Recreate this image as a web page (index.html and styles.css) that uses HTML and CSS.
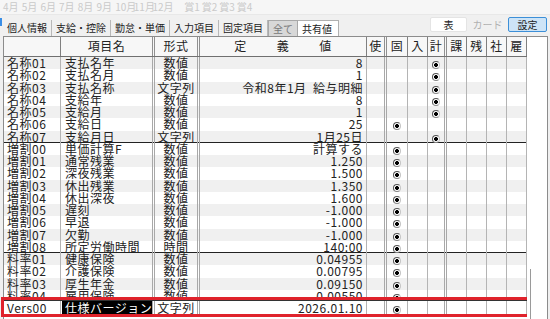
FILE: index.html
```html
<!DOCTYPE html>
<html lang="ja">
<head>
  <meta charset="UTF-8">
  <title>給与設定</title>
  <link rel="stylesheet" href="styles.css">
</head>
<body>
  <div class="months">
    <span class="month">4月</span><span class="month">5月</span><span class="month">6月</span>
    <span class="month">7月</span><span class="month">8月</span><span class="month">9月</span>
    <span class="month">10月</span><span class="month">11月</span><span class="month">12月</span>
    <span class="bonus">賞1</span><span class="bonus">賞2</span><span class="bonus">賞3</span><span class="bonus">賞4</span>
  </div>
  <div class="toolbar">
    <div class="tabs">
      <span class="tab">個人情報</span>
      <span class="tab">支給・控除</span>
      <span class="tab">勤怠・単価</span>
      <span class="tab">入力項目</span>
      <span class="tab">固定項目</span>
      <span class="tab tab-on">全て</span>
      <span class="tab tab-box">共有値</span>
    </div>
    <div class="views">
      <button class="view">表</button>
      <button class="view view-off">カード</button>
      <button class="view view-active">設定</button>
    </div>
  </div>
  <div class="sheet">
    <div class="grid">
      <div class="row head">
        <div class="cell"></div>
        <div class="cell c-center dbl">項目名</div>
        <div class="cell c-center dbl">形式</div>
        <div class="cell c-spread"><span>定</span><span>義</span><span>値</span></div>
        <div class="cell c-center dbl">使</div>
        <div class="cell c-center">固</div>
        <div class="cell c-center">入</div>
        <div class="cell c-center dbl">計</div>
        <div class="cell c-center">課</div>
        <div class="cell c-center">残</div>
        <div class="cell c-center">社</div>
        <div class="cell c-center">雇</div>
      </div>
      <div class="rows" id="rows"></div>
      <div class="row pinned" id="pinned"></div>
    </div>
    <div class="vscroll"><div class="thumb"></div></div>
  </div>
  <script>
    const flags = ["使", "固", "入", "計", "課", "残", "社", "雇"];
    const doubles = ["使", "計"];
    const items = [
      ["名称01", "支払名年", "数値", "8", "計"],
      ["名称02", "支払名月", "数値", "1", "計"],
      ["名称03", "支払名称", "文字列", "令和8年1月  給与明細", "計"],
      ["名称04", "支給年", "数値", "8", "計"],
      ["名称05", "支給月", "数値", "1", "計"],
      ["名称06", "支給日", "数値", "25", "固"],
      ["名称07", "支給月日", "文字列", "1月25日", "計"],
      ["増割00", "単価計算F", "数値", "計算する", "固", true],
      ["増割01", "通常残業", "数値", "1.250", "固"],
      ["増割02", "深夜残業", "数値", "1.500", "固"],
      ["増割03", "休出残業", "数値", "1.350", "固"],
      ["増割04", "休出深夜", "数値", "1.600", "固"],
      ["増割05", "遅刻", "数値", "-1.000", "固"],
      ["増割06", "早退", "数値", "-1.000", "固"],
      ["増割07", "欠勤", "数値", "-1.000", "固"],
      ["増割08", "所定労働時間", "時間", "140:00", "固"],
      ["料率01", "健康保険", "数値", "0.04955", "固", true],
      ["料率02", "介護保険", "数値", "0.00795", "固"],
      ["料率03", "厚生年金", "数値", "0.09150", "固"],
      ["料率04", "雇用保険", "数値", "0.00550", "固"]
    ];

    function cell(cls, text) {
      const div = document.createElement("div");
      div.className = "cell " + cls;
      if (text) div.textContent = text;
      return div;
    }

    function fillRow(row, item, selected) {
      const [code, name, type, value, mark] = item;
      row.appendChild(cell("c-code", code));
      const nameCell = cell("c-name dbl", selected ? "" : name);
      if (selected) {
        const sel = document.createElement("span");
        sel.className = "selected";
        sel.textContent = name;
        nameCell.appendChild(sel);
      }
      row.appendChild(nameCell);
      row.appendChild(cell("c-center dbl", type));
      row.appendChild(cell("c-value", value));
      flags.forEach(f => {
        const c = cell("c-center" + (doubles.includes(f) ? " dbl" : ""));
        if (f === mark) {
          const r = document.createElement("span");
          r.className = "radio";
          c.appendChild(r);
        }
        row.appendChild(c);
      });
    }

    const rows = document.getElementById("rows");
    items.forEach(item => {
      const row = document.createElement("div");
      row.className = "row data" + (item[5] ? " group" : "");
      fillRow(row, item, false);
      rows.appendChild(row);
    });

    fillRow(document.getElementById("pinned"), ["Vers00", "仕様バージョン", "文字列", "2026.01.10", "固"], true);
  </script>
</body>
</html>
```

FILE: styles.css
```css
body {
  margin: 0;
  background-color: #f0f0f0;
  font-family: "Noto Sans CJK JP", "DejaVu Sans", sans-serif;
  color: #222;
  overflow: hidden;
}
.months {
  display: flex;
  height: 14px;
  padding-left: 3px;
  font-size: 10px;
  line-height: 14px;
  color: #cacaca;
  white-space: nowrap;
  background-color: #f6f6f6;
  border-bottom: 1px solid #e8e8e8;
}
.month {
  width: 18.7px;
}
.bonus {
  width: 17.5px;
}
.month + .bonus {
  margin-left: 13px;
}
.toolbar {
  position: relative;
  display: flex;
  justify-content: space-between;
  align-items: flex-end;
  height: 21px;
}
.toolbar::before {
  content: "";
  position: absolute;
  left: 0;
  top: 3px;
  width: 2px;
  height: 8px;
  background-color: #3a8ee6;
}
.tabs {
  display: flex;
  padding-left: 3px;
  height: 16px;
}
.tab {
  padding: 0 4px;
  font-size: 10px;
  line-height: 16px;
  color: #222;
  border-right: 1px solid #b8b8b8;
}
.tab-on {
  background-color: #d8d8d8;
  border: 1px solid #a8a8a8;
  border-bottom: none;
  line-height: 15px;
  color: #777;
}
.tab-box {
  background-color: #fff;
  border: 1px solid #b0b0b0;
  border-bottom: none;
  border-left: none;
  line-height: 15px;
  padding-right: 6px;
}
.views {
  display: flex;
  gap: 2px;
  align-self: flex-start;
  margin-top: 2px;
  margin-right: 3px;
}
.view {
  width: 37px;
  height: 15px;
  padding: 0;
  font-family: inherit;
  font-size: 10px;
  line-height: 13px;
  background-color: #fff;
  border: 1px solid #e4e4e4;
  border-radius: 2px;
  color: #222;
}
.view-off {
  background-color: #f0f0f0;
  border-color: #f0f0f0;
  color: #b0b0b0;
}
.view-active {
  width: 39px;
  background-color: #cde4f7;
  border-color: #3c8fd8;
}
.sheet {
  display: flex;
  margin-left: 3px;
  width: 545px;
  height: 283px;
  border: 1px solid #8c8c8c;
  border-bottom: none;
  background-color: #fff;
  box-sizing: border-box;
}
.grid {
  width: 523px;
}
.row {
  display: grid;
  grid-template-columns: 57px 94px 45px 167px 20px 21px 20px 19px 20px 20px 20px 20px;
  font-size: 12px;
  letter-spacing: 0.5px;
}
.cell {
  box-sizing: border-box;
  border-right: 1px solid #b4b4b4;
  white-space: pre;
  overflow: hidden;
}
.cell.dbl {
  border-right: 3px double #a8a8a8;
}
.head {
  height: 19px;
  line-height: 18px;
  background-color: #f7f7f7;
  border-bottom: 1px solid #707070;
}
.head .cell {
  border-right-color: #808080;
}
.head .cell.dbl {
  border-right-color: #909090;
}
.rows {
  height: 243px;
  overflow: hidden;
}
.data {
  height: 12.25px;
  line-height: 12.25px;
}
.data:nth-child(odd) {
  background-color: #f0f0f0;
}
.data.group {
  border-top: 1px solid #222;
  margin-top: -1px;
}
.c-code {
  padding-left: 3px;
}
.c-name {
  padding-left: 4px;
}
.c-center {
  text-align: center;
}
.c-value {
  text-align: right;
  padding-right: 3px;
}
.c-spread {
  display: flex;
  justify-content: center;
  gap: 30px;
}
.radio {
  display: inline-block;
  width: 8px;
  height: 8px;
  border: 1px solid;
  border-color: #555 #c4c4c4 #888 #555;
  border-radius: 50%;
  box-sizing: border-box;
  vertical-align: -1px;
  background: radial-gradient(circle, #000 1.7px, #fff 2.2px);
}
.pinned {
  height: 14px;
  line-height: 13px;
  border-top: 1px solid #333;
  box-sizing: border-box;
  outline: 3px solid #e0232c;
}
.selected {
  display: inline-block;
  margin-left: -3px;
  padding: 0 3px;
  background-color: #000;
  color: #fff;
}
.vscroll {
  flex: 1;
  background-color: #fff;
}
.thumb {
  margin-top: 232px;
  margin-left: 3px;
  height: 50px;
  border-left: 1px solid #9a9a9a;
}
```
